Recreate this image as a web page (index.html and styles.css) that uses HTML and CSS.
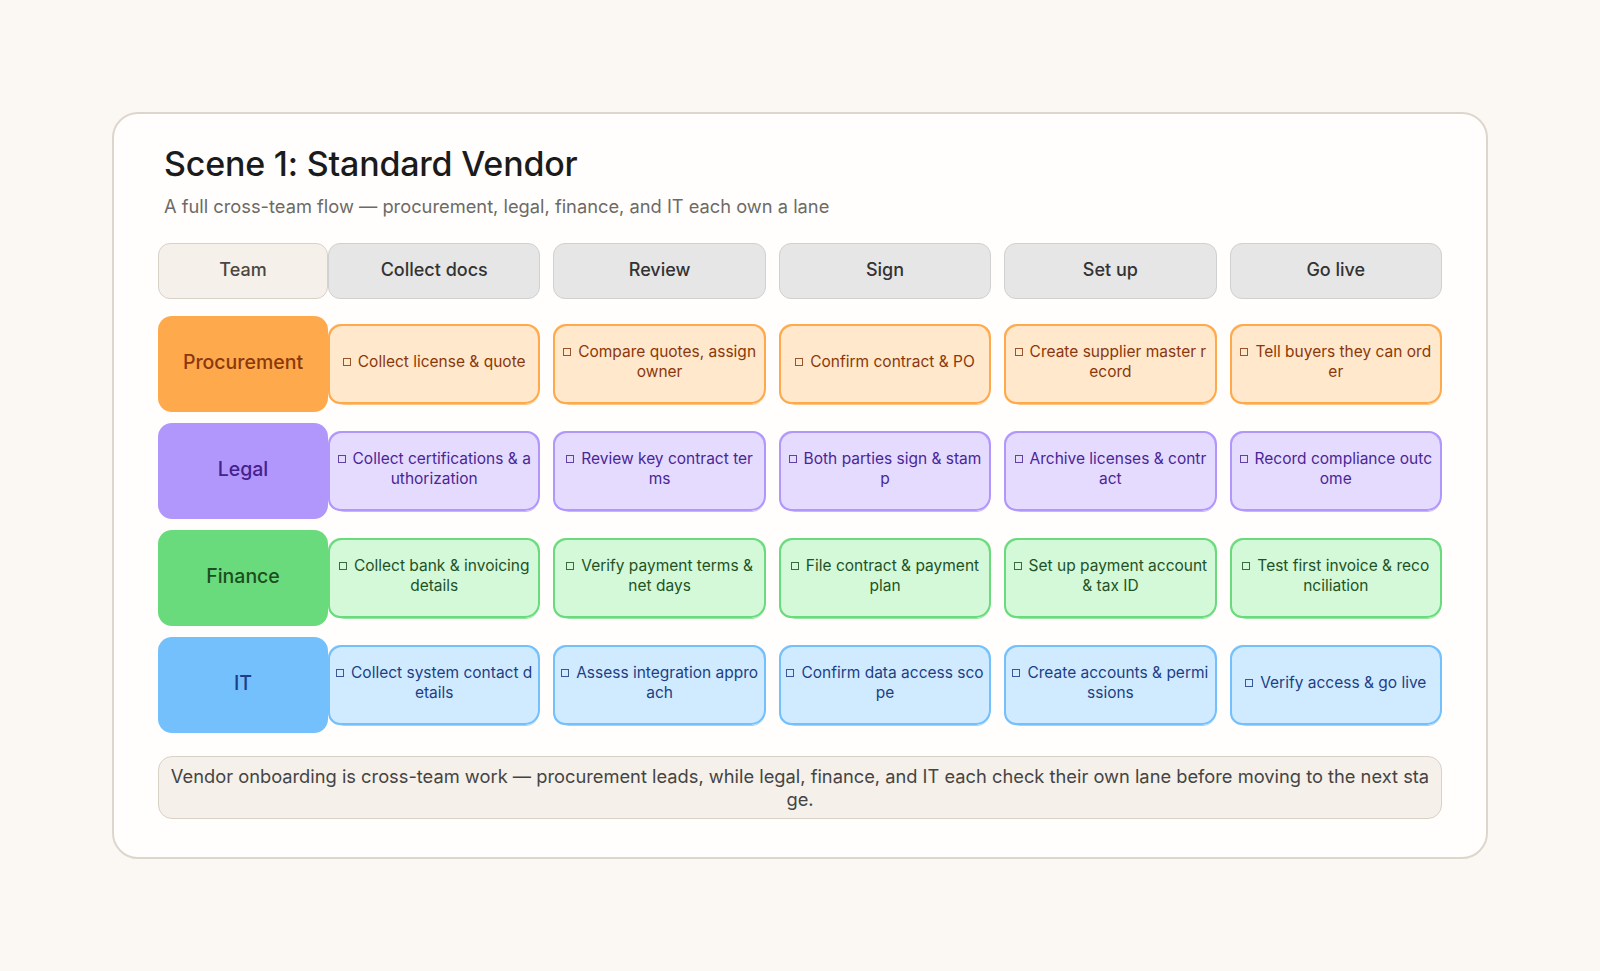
FILE: index.html
```html
<!DOCTYPE html>
<html lang="en">
<head>
<meta charset="utf-8">
<title>Scene 1: Standard Vendor</title>
<link rel="stylesheet" href="styles.css">
</head>
<body>
<main class="scene">
  <h1 class="title">Scene 1: Standard Vendor</h1>
  <p class="subtitle">A full cross-team flow — procurement, legal, finance, and IT each own a lane</p>

  <div class="board">
    <div class="head head-team">Team</div>
    <div class="head">Collect docs</div>
    <div class="head">Review</div>
    <div class="head">Sign</div>
    <div class="head">Set up</div>
    <div class="head">Go live</div>

    <div class="team team-orange">Procurement</div>
    <div class="task task-orange"><p class="tx"><span class="cb"></span>Collect license &amp; quote</p></div>
    <div class="task task-orange"><p class="tx"><span class="cb"></span>Compare quotes, assign owner</p></div>
    <div class="task task-orange"><p class="tx"><span class="cb"></span>Confirm contract &amp; PO</p></div>
    <div class="task task-orange"><p class="tx"><span class="cb"></span>Create supplier master record</p></div>
    <div class="task task-orange"><p class="tx"><span class="cb"></span>Tell buyers they can order</p></div>

    <div class="team team-purple">Legal</div>
    <div class="task task-purple"><p class="tx"><span class="cb"></span>Collect certifications &amp; authorization</p></div>
    <div class="task task-purple"><p class="tx"><span class="cb"></span>Review key contract terms</p></div>
    <div class="task task-purple"><p class="tx"><span class="cb"></span>Both parties sign &amp; stamp</p></div>
    <div class="task task-purple"><p class="tx"><span class="cb"></span>Archive licenses &amp; contract</p></div>
    <div class="task task-purple"><p class="tx"><span class="cb"></span>Record compliance outcome</p></div>

    <div class="team team-green">Finance</div>
    <div class="task task-green"><p class="tx"><span class="cb"></span>Collect bank &amp; invoicing details</p></div>
    <div class="task task-green"><p class="tx"><span class="cb"></span>Verify payment terms &amp; net days</p></div>
    <div class="task task-green"><p class="tx"><span class="cb"></span>File contract &amp; payment plan</p></div>
    <div class="task task-green"><p class="tx"><span class="cb"></span>Set up payment account &amp; tax ID</p></div>
    <div class="task task-green"><p class="tx"><span class="cb"></span>Test first invoice &amp; reco<br>nciliation</p></div>

    <div class="team team-blue">IT</div>
    <div class="task task-blue"><p class="tx"><span class="cb"></span>Collect system contact details</p></div>
    <div class="task task-blue"><p class="tx"><span class="cb"></span>Assess integration approach</p></div>
    <div class="task task-blue"><p class="tx"><span class="cb"></span>Confirm data access scope</p></div>
    <div class="task task-blue"><p class="tx"><span class="cb"></span>Create accounts &amp; permissions</p></div>
    <div class="task task-blue"><p class="tx"><span class="cb"></span>Verify access &amp; go live</p></div>
  </div>

  <p class="note">Vendor onboarding is cross-team work — procurement leads, while legal, finance, and IT each check their own lane before moving to the next stage.</p>
</main>
</body>
</html>
```

FILE: styles.css
```css
* {
  box-sizing: border-box;
}

html, body {
  margin: 0;
  padding: 0;
}

body {
  background: #fbf8f3;
  font-family: Inter, "Liberation Sans", sans-serif;
  min-height: 100vh;
  display: flex;
  align-items: center;
  justify-content: center;
}

.scene {
  width: 1376px;
  background: #fffefd;
  border: 2px solid #dcd6cc;
  border-radius: 26px;
  padding: 31px 44px 38px;
}

.title {
  margin: 0 0 12px 6px;
  font-size: 34px;
  line-height: 38px;
  font-weight: 500;
  color: #1b1b1b;
  letter-spacing: -0.2px;
}

.subtitle {
  margin: 0 0 26px 6px;
  font-size: 18.3px;
  line-height: 22px;
  color: #6d6a66;
}

.board {
  display: grid;
  grid-template-columns: 157px repeat(5, 1fr);
  grid-template-rows: 62px;
  grid-auto-rows: 96px;
  column-gap: 13px;
  row-gap: 11px;
}

.head {
  align-self: start;
  display: flex;
  align-items: center;
  justify-content: center;
  height: 56px;
  background: #e6e6e6;
  border: 1px solid #d0d0d0;
  border-radius: 12px;
  font-size: 18px;
  font-weight: 500;
  color: #333333;
  padding-bottom: 4px;
}

.head-team {
  background: #f5f0e9;
  border-color: #d8d1c6;
  color: #4b4641;
  margin-right: -13px;
}

.team {
  display: flex;
  align-items: center;
  justify-content: center;
  margin-right: -13px;
  border-radius: 14px;
  font-size: 19.5px;
  font-weight: 500;
  padding-bottom: 5px;
}

.team-orange { background: #ffa94d; color: #8a380b; }
.team-purple { background: #b197fc; color: #45208f; }
.team-green  { background: #69db7c; color: #1c4d20; }
.team-blue   { background: #74c0fc; color: #1c3f86; }

.task {
  position: relative;
  margin: 8px 0;
  display: flex;
  align-items: center;
  justify-content: center;
  border: 2px solid;
  border-radius: 14px 13px 15px 12px;
  padding: 0 5.2px 5px;
}

.task::after {
  content: "";
  position: absolute;
  inset: -2px -1px -3px -2px;
  border: 1.5px solid;
  border-color: inherit;
  border-radius: 12px 15px 13px 16px;
  opacity: 0.7;
  pointer-events: none;
}

.tx {
  margin: 0;
  width: 100%;
  text-align: center;
  font-size: 15.5px;
  line-height: 19.4px;
  word-break: break-all;
}

.cb {
  display: inline-block;
  width: 8px;
  height: 8px;
  border: 1px solid currentColor;
  margin-right: 7px;
  vertical-align: 1px;
  opacity: 0.85;
}

.task-orange { background: #ffe8cc; border-color: #ffa94d; color: #8a380b; }
.task-purple { background: #e5dbff; border-color: #b197fc; color: #4a2696; }
.task-green  { background: #d3f9d8; border-color: #69db7c; color: #1f5225; }
.task-blue   { background: #d0ebff; border-color: #74c0fc; color: #1c3f86; }

.note {
  margin: 23px 0 0;
  background: #f5f0e9;
  border: 1px solid #d8d1c6;
  border-radius: 14px;
  padding: 8px 7px;
  font-size: 18.3px;
  line-height: 22.5px;
  text-align: center;
  color: #444444;
  word-break: break-all;
  min-height: 62px;
}
```
